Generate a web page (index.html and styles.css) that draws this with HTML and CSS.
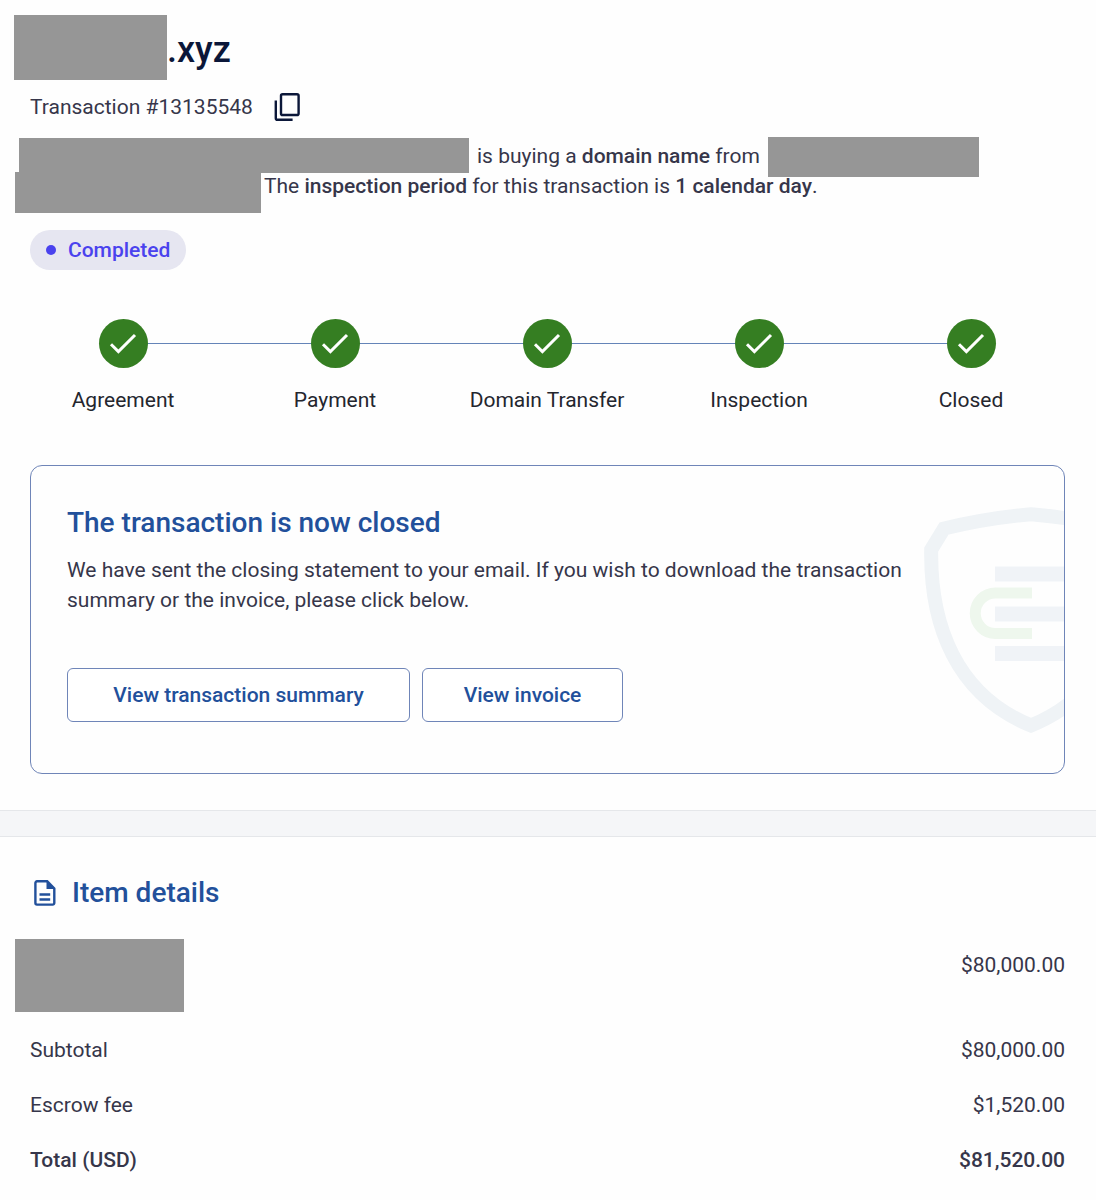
FILE: index.html
```html
<!DOCTYPE html>
<html lang="en">
<head>
	<meta charset="UTF-8">
	<meta name="viewport" content="width=device-width, initial-scale=1">
	<title>Transaction #13135548</title>
	<link rel="stylesheet" href="styles.css">
</head>
<body>
	<main>
		<section class="summary">
			<h1 class="title"><span class="redacted redacted-title"></span>.xyz</h1>
			<div class="transaction-id">
				<span>Transaction #13135548</span>
				<button class="copy" type="button" aria-label="Copy transaction number">
					<svg width="26" height="30" viewBox="0 0 26 30" fill="none" stroke="#0b1739" stroke-width="2.4">
						<rect x="7" y="2.2" width="17.6" height="20.8" rx="1.6"/>
						<path d="M1.8 8.5V26.2a1.6 1.6 0 0 0 1.6 1.6H18.6"/>
					</svg>
				</button>
			</div>
			<div class="parties">
				<div class="line">
					<span class="redacted redacted-buyer"></span>
					<span>is buying a <b>domain name</b> from</span>
					<span class="redacted redacted-seller"></span>
				</div>
				<div class="line">
					<span class="redacted redacted-email"></span>
					<span>The <b>inspection period</b> for this transaction is <b>1 calendar day</b>.</span>
				</div>
			</div>
			<span class="status">Completed</span>
		</section>

		<ol class="steps">
			<li>
				<span class="dot"><svg width="28" height="24" viewBox="0 0 28 24"><path d="M2 12.2L9.4 19.6L26 3"/></svg></span>
				Agreement
			</li>
			<li>
				<span class="dot"><svg width="28" height="24" viewBox="0 0 28 24"><path d="M2 12.2L9.4 19.6L26 3"/></svg></span>
				Payment
			</li>
			<li>
				<span class="dot"><svg width="28" height="24" viewBox="0 0 28 24"><path d="M2 12.2L9.4 19.6L26 3"/></svg></span>
				Domain Transfer
			</li>
			<li>
				<span class="dot"><svg width="28" height="24" viewBox="0 0 28 24"><path d="M2 12.2L9.4 19.6L26 3"/></svg></span>
				Inspection
			</li>
			<li>
				<span class="dot"><svg width="28" height="24" viewBox="0 0 28 24"><path d="M2 12.2L9.4 19.6L26 3"/></svg></span>
				Closed
			</li>
		</ol>

		<section class="card">
			<svg class="shield" width="140" height="228" viewBox="0 0 140 228" fill="none">
				<path d="M107 7.2Q63 11 20 21.5L7.2 42.5C6 118 32 188 107 218.5C182 188 208 118 206.8 42.5L194 21.5Q151 11 107 7.2Z" stroke="#eff3f6" stroke-width="14"/>
				<path d="M71 59.5H140V74.5H71ZM71 99.5H140V114.5H71ZM71 139H140V154H71Z" fill="#f0f3f7"/>
				<path d="M108 86H71.5a20.2 20.2 0 0 0 0 40.5H108" stroke="#eef7ed" stroke-width="11"/>
			</svg>
			<h2>The transaction is now closed</h2>
			<p>We have sent the closing statement to your email. If you wish to download the transaction summary or the invoice, please click below.</p>
			<div class="actions">
				<button type="button">View transaction summary</button>
				<button type="button">View invoice</button>
			</div>
		</section>

		<div class="divider"></div>

		<section class="details">
			<h2>
				<svg width="22" height="26" viewBox="0 0 22 26" fill="none" stroke="#22509b" stroke-width="2.4">
					<path d="M3 1.3H13.2L20.3 8.4V23a1.6 1.6 0 0 1-1.6 1.6H3A1.6 1.6 0 0 1 1.4 23V2.9A1.6 1.6 0 0 1 3 1.3Z"/>
					<path d="M12.5 1.3V9H20.3Z" fill="#22509b" stroke="none"/>
					<path d="M5.5 14.5H16.2M5.5 19.5H16.2"/>
				</svg>
				Item details
			</h2>
			<table>
				<tbody>
					<tr class="item">
						<th scope="row"><span class="redacted redacted-item"></span></th>
						<td>$80,000.00</td>
					</tr>
					<tr>
						<th scope="row">Subtotal</th>
						<td>$80,000.00</td>
					</tr>
					<tr>
						<th scope="row">Escrow fee</th>
						<td>$1,520.00</td>
					</tr>
					<tr class="total">
						<th scope="row">Total (USD)</th>
						<td>$81,520.00</td>
					</tr>
				</tbody>
			</table>
		</section>
	</main>
</body>
</html>
```
FILE: styles.css
```css
* {
	box-sizing: border-box;
}
body {
	margin: 0;
	background-color: #fefefe;
	color: #36364a;
	font-family: Roboto, "Liberation Sans", sans-serif;
	font-size: 21px;
	line-height: 30px;
}
h1, h2, p, ol {
	margin: 0;
	padding: 0;
}
b {
	font-weight: 500;
}
button {
	font: inherit;
	cursor: pointer;
}
.redacted {
	flex: none;
	background-color: #969696;
}

/* heading */
.summary {
	padding: 15px 30px 0;
}
.title {
	display: flex;
	height: 64px;
	color: #0b1739;
	font-size: 36px;
	font-weight: 500;
	line-height: 70px;
}
.redacted-title {
	width: 153px;
	height: 65px;
	margin-left: -16px;
}
.transaction-id {
	display: flex;
	align-items: center;
	gap: 21px;
	height: 30px;
	margin-top: 13px;
}
.copy {
	display: flex;
	padding: 0;
	border: none;
	background: none;
}
.parties {
	margin-top: 19px;
}
.line {
	display: flex;
	height: 30px;
	white-space: nowrap;
}
.redacted-buyer {
	width: 450px;
	height: 35px;
	margin: -3px 8px 0 -11px;
}
.redacted-seller {
	width: 211px;
	height: 40px;
	margin: -4px 0 0 8px;
}
.redacted-email {
	width: 246px;
	height: 41px;
	margin: 1px 3px 0 -15px;
}
.status {
	display: inline-flex;
	align-items: center;
	gap: 12px;
	height: 40px;
	margin-top: 29px;
	padding: 0 16px;
	border-radius: 20px;
	background-color: #e6e6f1;
	color: #4a42ee;
	font-weight: 500;
}
.status::before {
	content: "";
	width: 10px;
	height: 10px;
	border-radius: 50%;
	background-color: #4a42ee;
}

/* progress */
.steps {
	display: grid;
	grid-template-columns: repeat(5, 1fr);
	margin: 49px 19px 0 17px;
	list-style: none;
	color: #24262e;
	text-align: center;
}
.steps li {
	position: relative;
}
.steps li + li::before {
	content: "";
	position: absolute;
	top: 24px;
	right: 50%;
	width: 100%;
	height: 1px;
	background-color: #6484b8;
}
.dot {
	position: relative;
	z-index: 1;
	display: flex;
	align-items: center;
	justify-content: center;
	width: 49px;
	height: 49px;
	margin: 0 auto 17px;
	border-radius: 50%;
	background-color: #357e22;
}
.dot path {
	fill: none;
	stroke: #fff;
	stroke-width: 3;
}

/* closed card */
.card {
	position: relative;
	overflow: hidden;
	margin: 50px 31px 36px 30px;
	padding: 42px 36px 51px;
	border: 1px solid #6f85b8;
	border-radius: 12px;
}
.shield {
	position: absolute;
	top: 41px;
	right: 0;
}
h2 {
	color: #22509b;
	font-size: 28px;
	font-weight: 500;
	line-height: 30px;
}
.card p {
	position: relative;
	max-width: 880px;
	margin-top: 17px;
}
.actions {
	display: grid;
	grid-template-columns: 343px 201px;
	gap: 12px;
	margin-top: 53px;
}
.actions button {
	height: 54px;
	border: 1px solid #6f85b8;
	border-radius: 6px;
	background-color: #fff;
	color: #22509b;
	font-weight: 500;
}
.divider {
	height: 27px;
	border-top: 1px solid #e5e7ea;
	border-bottom: 1px solid #e5e7ea;
	background-color: #f5f6f8;
}

/* item details */
.details {
	padding: 41px 31px 12px 30px;
}
.details h2 {
	display: flex;
	align-items: center;
	gap: 16px;
	padding-left: 4px;
}
table {
	width: 100%;
	margin-top: 31px;
	border-collapse: collapse;
}
th, td {
	height: 55px;
	padding: 0;
	font-weight: 400;
	text-align: left;
}
td {
	text-align: right;
}
.item th, .item td {
	height: 83px;
	vertical-align: top;
}
.item td {
	padding-top: 11px;
}
.redacted-item {
	display: block;
	width: 169px;
	height: 73px;
	margin-left: -15px;
}
.total th, .total td {
	font-weight: 500;
}
```
